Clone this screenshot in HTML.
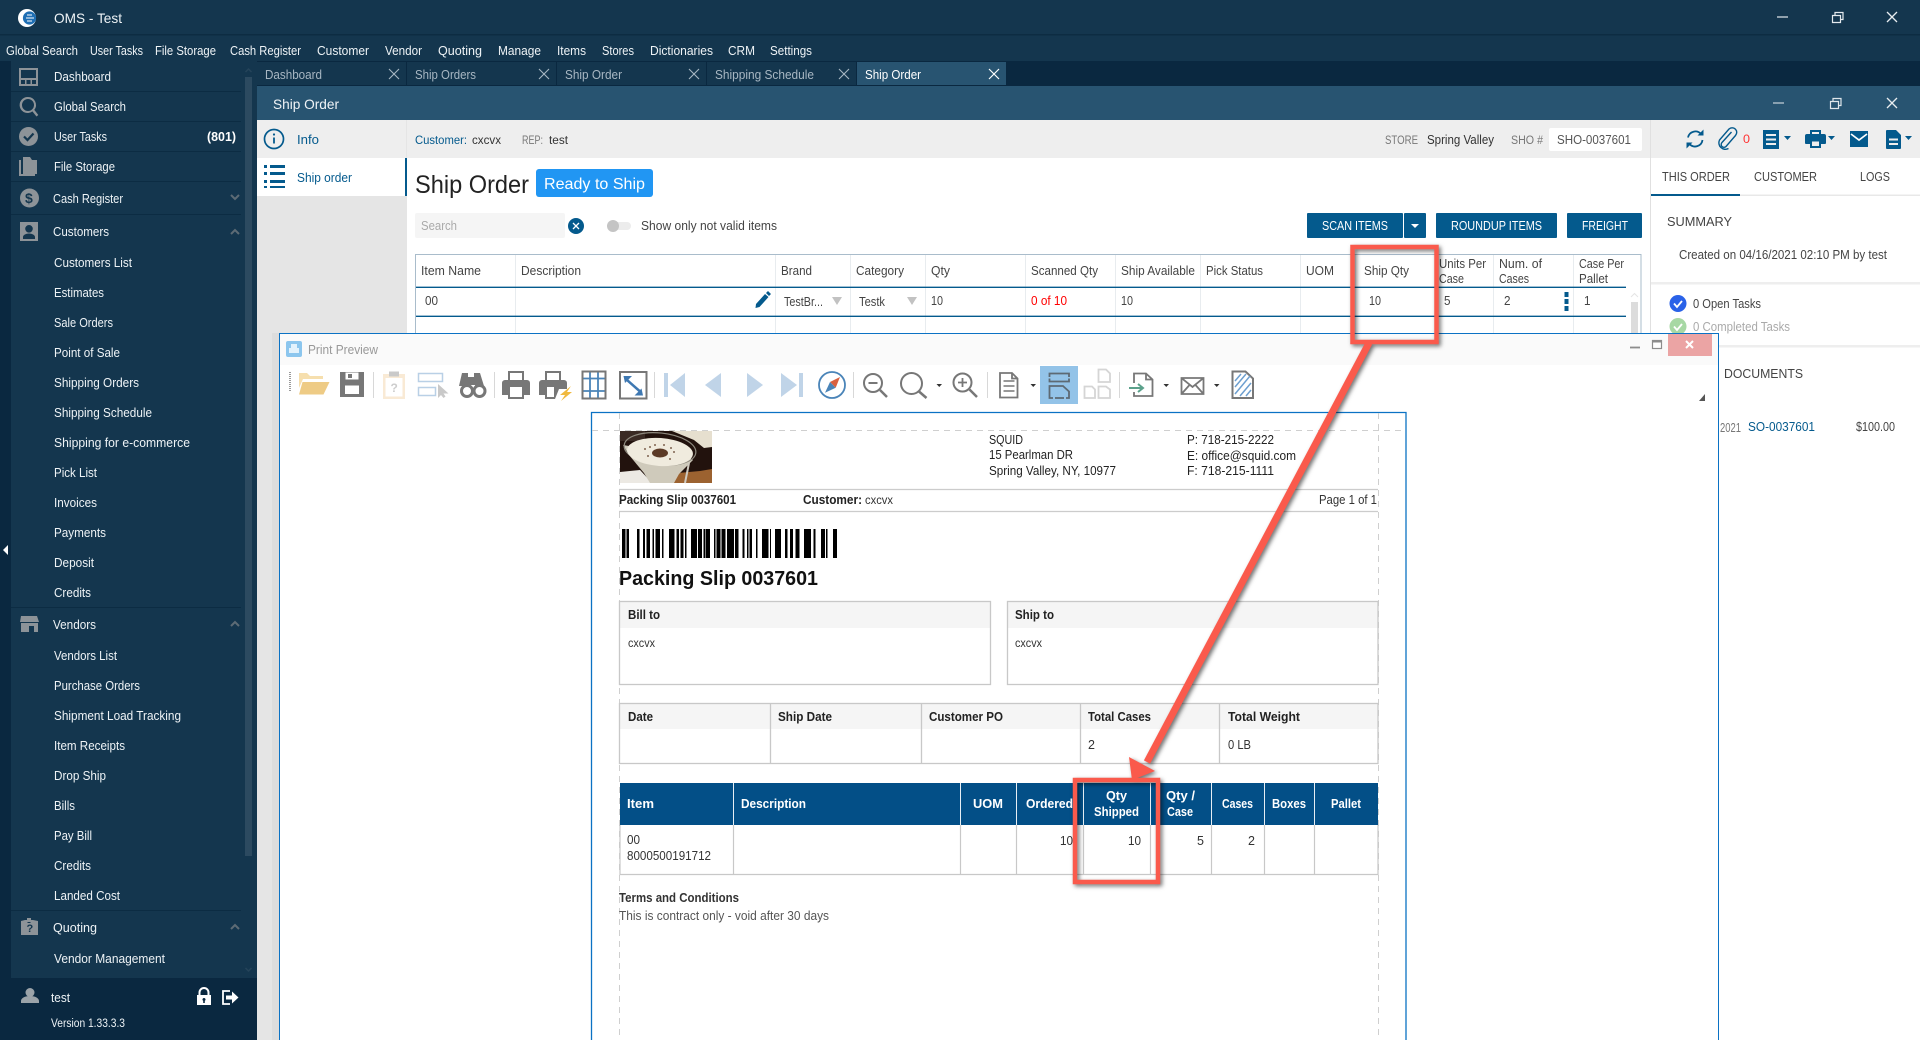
<!DOCTYPE html>
<html><head><meta charset="utf-8"><title>OMS - Test</title>
<style>
html,body{margin:0;padding:0;width:1920px;height:1040px;overflow:hidden;background:#fff}
svg{display:block}
text{font-family:"Liberation Sans",sans-serif;font-size:12.5px;fill:#333}
.w text{fill:#eef3f6}
.t text{fill:#a8b7c3}
.g text{fill:#777}
.b text{font-weight:bold;fill:#222}
.h text{font-weight:bold;fill:#fff}
.k text{fill:#444}
</style></head><body>
<svg xmlns="http://www.w3.org/2000/svg" width="1920" height="1040" viewBox="0 0 1920 1040">
<!-- window chrome -->
<rect width="1920" height="1040" fill="#14364e"/>
<rect y="34" width="1920" height="1.5" fill="#0d2c42"/>
<rect x="0" y="61" width="11" height="979" fill="#0a2840"/>
<circle cx="27" cy="18" r="9" fill="#fff"/>
<circle cx="29.5" cy="18" r="6.6" fill="#1f6fb4"/>
<path d="M27 15h5M26 18h8M27 21h5" stroke="#fff" stroke-width="1.100"/>
<g class="w">
<text x="54" y="23" textLength="68" lengthAdjust="spacingAndGlyphs" style="font-size:14px">OMS - Test</text>
<text x="6" y="55" textLength="72" lengthAdjust="spacingAndGlyphs">Global Search</text>
<text x="90" y="55" textLength="53" lengthAdjust="spacingAndGlyphs">User Tasks</text>
<text x="155" y="55" textLength="61" lengthAdjust="spacingAndGlyphs">File Storage</text>
<text x="230" y="55" textLength="71" lengthAdjust="spacingAndGlyphs">Cash Register</text>
<text x="317" y="55" textLength="52" lengthAdjust="spacingAndGlyphs">Customer</text>
<text x="385" y="55" textLength="37" lengthAdjust="spacingAndGlyphs">Vendor</text>
<text x="438" y="55" textLength="44" lengthAdjust="spacingAndGlyphs">Quoting</text>
<text x="498" y="55" textLength="43" lengthAdjust="spacingAndGlyphs">Manage</text>
<text x="557" y="55" textLength="29" lengthAdjust="spacingAndGlyphs">Items</text>
<text x="602" y="55" textLength="32" lengthAdjust="spacingAndGlyphs">Stores</text>
<text x="650" y="55" textLength="63" lengthAdjust="spacingAndGlyphs">Dictionaries</text>
<text x="728" y="55" textLength="27" lengthAdjust="spacingAndGlyphs">CRM</text>
<text x="770" y="55" textLength="42" lengthAdjust="spacingAndGlyphs">Settings</text>
</g>
<path d="M1777 17h11" stroke="#b9c5cd" stroke-width="1.5"/>
<path d="M1832.5 15.5h8v7h-8zM1835 15v-2.500h8v7h-2" fill="none" stroke="#e4eaee" stroke-width="1.2"/>
<path d="M1887 12l10 10M1897 12l-10 10" stroke="#e8edf0" stroke-width="1.3"/>
<!-- tab strip -->
<rect x="257" y="61" width="1663" height="25" fill="#0a2840"/>
<rect x="257" y="62" width="149" height="23" fill="#14364e"/>
<rect x="407" y="62" width="149" height="23" fill="#14364e"/>
<rect x="557" y="62" width="149" height="23" fill="#14364e"/>
<rect x="707" y="62" width="149" height="23" fill="#14364e"/>
<rect x="857" y="62" width="149" height="23" fill="#285471"/>
<g class="t">
<text x="265" y="79" textLength="57" lengthAdjust="spacingAndGlyphs">Dashboard</text>
<text x="415" y="79" textLength="61" lengthAdjust="spacingAndGlyphs">Ship Orders</text>
<text x="565" y="79" textLength="57" lengthAdjust="spacingAndGlyphs">Ship Order</text>
<text x="715" y="79" textLength="99" lengthAdjust="spacingAndGlyphs">Shipping Schedule</text>
</g>
<text x="865" y="79" textLength="56" lengthAdjust="spacingAndGlyphs" style="fill:#fff">Ship Order</text>
<path d="M389 69l10 10M399 69l-10 10M539 69l10 10M549 69l-10 10M689 69l10 10M699 69l-10 10M839 69l10 10M849 69l-10 10" stroke="#a8b7c3" stroke-width="1.1"/>
<path d="M989 69l10 10M999 69l-10 10" stroke="#fff" stroke-width="1.2"/>
<!-- inner window header -->
<rect x="257" y="86" width="1663" height="34" fill="#285471"/>
<text x="273" y="109" textLength="66" lengthAdjust="spacingAndGlyphs" style="fill:#f0f4f7;font-size:14px">Ship Order</text>
<path d="M1773 103h11" stroke="#a9bac6" stroke-width="1.5"/>
<path d="M1830.500 101.500h8v7h-8zM1833 101v-2.500h8v7h-2" fill="none" stroke="#dfe6ea" stroke-width="1.2"/>
<path d="M1887 98l10 10M1897 98l-10 10" stroke="#e8edf0" stroke-width="1.300"/>
<!-- sidebar -->
<path d="M11 91.500h230M11 121.500h230M11 151.500h230M11 181.500h230M11 214.500h230M11 607.500h230M11 910.500h230" stroke="#0c2c43" stroke-width="1"/>
<rect x="245" y="77" width="7" height="779" fill="#2c4a60"/>
<path d="M245.500 72l3-3 3 3M245.500 968l3 3 3-3" fill="none" stroke="#25445a" stroke-width="1.500"/>
<g class="w">
<text x="54" y="81" textLength="57" lengthAdjust="spacingAndGlyphs">Dashboard</text>
<text x="54" y="111" textLength="72" lengthAdjust="spacingAndGlyphs">Global Search</text>
<text x="54" y="141" textLength="53" lengthAdjust="spacingAndGlyphs">User Tasks</text>
<text x="54" y="171" textLength="61" lengthAdjust="spacingAndGlyphs">File Storage</text>
<text x="53" y="203" textLength="70" lengthAdjust="spacingAndGlyphs">Cash Register</text>
<text x="53" y="236" textLength="56" lengthAdjust="spacingAndGlyphs">Customers</text>
<text x="54" y="267" textLength="78" lengthAdjust="spacingAndGlyphs">Customers List</text>
<text x="54" y="297" textLength="50" lengthAdjust="spacingAndGlyphs">Estimates</text>
<text x="54" y="327" textLength="59" lengthAdjust="spacingAndGlyphs">Sale Orders</text>
<text x="54" y="357" textLength="66" lengthAdjust="spacingAndGlyphs">Point of Sale</text>
<text x="54" y="387" textLength="85" lengthAdjust="spacingAndGlyphs">Shipping Orders</text>
<text x="54" y="417" textLength="98" lengthAdjust="spacingAndGlyphs">Shipping Schedule</text>
<text x="54" y="447" textLength="136" lengthAdjust="spacingAndGlyphs">Shipping for e-commerce</text>
<text x="54" y="477" textLength="43" lengthAdjust="spacingAndGlyphs">Pick List</text>
<text x="54" y="507" textLength="43" lengthAdjust="spacingAndGlyphs">Invoices</text>
<text x="54" y="537" textLength="52" lengthAdjust="spacingAndGlyphs">Payments</text>
<text x="54" y="567" textLength="40" lengthAdjust="spacingAndGlyphs">Deposit</text>
<text x="54" y="597" textLength="37" lengthAdjust="spacingAndGlyphs">Credits</text>
<text x="53" y="629" textLength="43" lengthAdjust="spacingAndGlyphs">Vendors</text>
<text x="54" y="660" textLength="63" lengthAdjust="spacingAndGlyphs">Vendors List</text>
<text x="54" y="690" textLength="86" lengthAdjust="spacingAndGlyphs">Purchase Orders</text>
<text x="54" y="720" textLength="127" lengthAdjust="spacingAndGlyphs">Shipment Load Tracking</text>
<text x="54" y="750" textLength="71" lengthAdjust="spacingAndGlyphs">Item Receipts</text>
<text x="54" y="780" textLength="52" lengthAdjust="spacingAndGlyphs">Drop Ship</text>
<text x="54" y="810" textLength="21" lengthAdjust="spacingAndGlyphs">Bills</text>
<text x="54" y="840" textLength="38" lengthAdjust="spacingAndGlyphs">Pay Bill</text>
<text x="54" y="870" textLength="37" lengthAdjust="spacingAndGlyphs">Credits</text>
<text x="54" y="900" textLength="66" lengthAdjust="spacingAndGlyphs">Landed Cost</text>
<text x="53" y="932" textLength="44" lengthAdjust="spacingAndGlyphs">Quoting</text>
<text x="54" y="963" textLength="111" lengthAdjust="spacingAndGlyphs">Vendor Management</text>
</g>
<text x="207" y="141" textLength="29" lengthAdjust="spacingAndGlyphs" style="fill:#fff;font-weight:bold">(801)</text>
<path d="M231 195l4 4 4-4M231 234l4-4 4 4M231 626l4-4 4 4M231 929l4-4 4 4" fill="none" stroke="#5d6b75" stroke-width="2"/>
<!-- sidebar icons -->
<g fill="#8d9398">
<path fill-rule="evenodd" d="M19 68h19v18H19zM21 70v8h15v-8zM21 80v4h4v-4zM26.500 80v4h4v-4zM32 80v4h4v-4z"/>
<path fill-rule="evenodd" d="M28 97a8 8 0 0 1 6.300 12.900l4 5.100-1.800 1.500-4.100-5.100A8 8 0 1 1 28 97zm0 2a6 6 0 1 0 0 12 6 6 0 0 0 0-12z"/>
<circle cx="28.500" cy="136.500" r="9.500"/>
<path d="M23 157h7l2 3h5v14H23zM19 160h2v14h14v2H19z"/>
<circle cx="29.500" cy="198" r="9.500"/>
<path fill-rule="evenodd" d="M20 222h18v19H20zM29 225a3.800 3.800 0 1 0 0 7.600 3.800 3.800 0 0 0 0-7.600zM23 239h12v-2c0-2-3-3.500-6-3.500s-6 1.500-6 3.500z"/>
<path d="M21 616h16l2 6H20zM20 623h18v9h-4v-6h-5v6H21v-9zM23 626h3v3h-3z"/>
<path fill-rule="evenodd" d="M25 920h2v-2h4v2h2l5 1v14H21v-14zM27.500 922v1h3v-1z"/>
</g>
<path d="M24 136.500l3.500 3.500 6-6.500" fill="none" stroke="#14364e" stroke-width="2.200"/>
<text x="25" y="203" style="font-size:14px;font-weight:bold;fill:#14364e">$</text>
<text x="26.500" y="932" style="font-size:11px;font-weight:bold;fill:#14364e">?</text>
<path d="M8 545v10l-5-5z" fill="#fff"/>
<!-- footer -->
<rect x="11" y="978" width="246" height="62" fill="#0a2840"/>
<path d="M21 1001c0-3 4-5 9-5s9 2 9 5v2H21zM30 988a4.500 4.500 0 1 1 0 9 4.500 4.500 0 0 1 0-9z" fill="#9ba3a9"/>
<g class="w">
<text x="51" y="1002" textLength="19" lengthAdjust="spacingAndGlyphs">test</text>
<text x="51" y="1027" textLength="74" lengthAdjust="spacingAndGlyphs" style="font-size:11.500px">Version 1.33.3.3</text>
</g>
<path fill-rule="evenodd" d="M197 995h1.500v-2.500a5.500 5.500 0 0 1 11 0V995h1.500v10h-14zM200.500 995h7v-2.500a3.500 3.500 0 0 0-7 0zM204 998a1.500 1.500 0 0 0-.8 2.800V1003h1.600v-2.200A1.500 1.500 0 0 0 204 998z" fill="#fff"/>
<path d="M230 991h-7v13h7" fill="none" stroke="#fff" stroke-width="1.800"/>
<path d="M226 995.500h6v-4l6.500 6-6.500 6v-4h-6z" fill="#fff"/>
<!-- left tabs -->
<rect x="257" y="120" width="150" height="920" fill="#e5e5e5"/>
<rect x="257" y="120" width="149" height="38" fill="#eeeeee"/>
<rect x="257" y="158" width="148" height="38" fill="#fff"/>
<rect x="405" y="158" width="2" height="38" fill="#045a8d"/>
<circle cx="274" cy="139" r="9.500" fill="none" stroke="#045a8d" stroke-width="1.700"/>
<path d="M274 137.500v6" stroke="#045a8d" stroke-width="1.800"/><circle cx="274" cy="134.500" r="1.100" fill="#045a8d"/>
<path d="M264 165h3v3h-3zM264 172h3v3h-3zM264 180h3v3h-3zM264 187h0M270 165h15v3h-15zM270 172h15v3h-15zM270 180h15v3h-15zM264 186h3v2h-3zM270 186h15v2h-15z" fill="#045a8d"/>
<text x="297" y="144" textLength="22" lengthAdjust="spacingAndGlyphs" style="fill:#045a8d">Info</text>
<text x="297" y="182" textLength="55" lengthAdjust="spacingAndGlyphs" style="fill:#045a8d">Ship order</text>
<!-- main pane -->
<rect x="407" y="120" width="1243" height="920" fill="#fff"/>
<rect x="407" y="120" width="1243" height="38" fill="#eeeeee"/>
<rect x="407" y="333" width="1243" height="707" fill="#fafafa"/>
<text x="415" y="144" textLength="52" lengthAdjust="spacingAndGlyphs" style="fill:#045a8d;font-size:11.500px">Customer:</text>
<text x="472" y="144" textLength="29" lengthAdjust="spacingAndGlyphs" style="font-size:11.500px">cxcvx</text>
<text x="522" y="144" textLength="21" lengthAdjust="spacingAndGlyphs" style="fill:#777;font-size:11.500px">REP:</text>
<text x="549" y="144" textLength="19" lengthAdjust="spacingAndGlyphs" style="font-size:11.500px">test</text>
<text x="1385" y="144" textLength="33" lengthAdjust="spacingAndGlyphs" style="fill:#777;font-size:11.500px">STORE</text>
<text x="1427" y="144" textLength="67" lengthAdjust="spacingAndGlyphs">Spring Valley</text>
<text x="1511" y="144" textLength="32" lengthAdjust="spacingAndGlyphs" style="fill:#777;font-size:11.500px">SHO #</text>
<rect x="1549" y="128" width="93" height="23" rx="2" fill="#fff"/>
<text x="1557" y="144" textLength="74" lengthAdjust="spacingAndGlyphs" style="fill:#555">SHO-0037601</text>
<text x="415" y="193" textLength="114" lengthAdjust="spacingAndGlyphs" style="font-size:25px;fill:#222">Ship Order</text>
<rect x="536" y="169" width="117" height="28" rx="3" fill="#2196f3"/>
<text x="544" y="189" textLength="101" lengthAdjust="spacingAndGlyphs" style="font-size:16px;fill:#fff">Ready to Ship</text>
<rect x="415" y="213" width="150" height="25" rx="2" fill="#f5f5f5"/>
<text x="421" y="230" textLength="36" lengthAdjust="spacingAndGlyphs" style="fill:#aaa">Search</text>
<circle cx="576" cy="226" r="8" fill="#045a8d"/>
<path d="M573 223l6 6M579 223l-6 6" stroke="#fff" stroke-width="1.300"/>
<rect x="609" y="222" width="22" height="8" rx="4" fill="#ececec"/>
<circle cx="613" cy="226" r="6" fill="#c4c4c4"/>
<text x="641" y="230" textLength="136" lengthAdjust="spacingAndGlyphs" style="fill:#444">Show only not valid items</text>
<rect x="1307" y="213" width="96" height="25" rx="1" fill="#045a8d"/>
<rect x="1404" y="213" width="22" height="25" rx="1" fill="#045a8d"/>
<path d="M1411 224h8l-4 4z" fill="#fff"/>
<rect x="1436" y="213" width="121" height="25" rx="1" fill="#045a8d"/>
<rect x="1567" y="213" width="75" height="25" rx="1" fill="#045a8d"/>
<text x="1322" y="230" textLength="66" lengthAdjust="spacingAndGlyphs" style="fill:#fff">SCAN ITEMS</text>
<text x="1451" y="230" textLength="91" lengthAdjust="spacingAndGlyphs" style="fill:#fff">ROUNDUP ITEMS</text>
<text x="1582" y="230" textLength="46" lengthAdjust="spacingAndGlyphs" style="fill:#fff">FREIGHT</text>
<!-- table -->
<path d="M415.500 333V254.500H1641V333" fill="none" stroke="#a9bccb"/>
<path d="M515.500 255v78M775.500 255v78M850.500 255v78M925.500 255v78M1025.500 255v78M1115.500 255v78M1200.500 255v78M1300.500 255v78M1355.500 255v78M1435.500 255v78M1493.500 255v78M1573.500 255v78" stroke="#e8ecef"/>
<path d="M416 287.300h1210M416 316.300h1210" stroke="#045a8d" stroke-width="1.400"/>
<g class="k">
<text x="421" y="275" textLength="60" lengthAdjust="spacingAndGlyphs">Item Name</text>
<text x="521" y="275" textLength="60" lengthAdjust="spacingAndGlyphs">Description</text>
<text x="781" y="275" textLength="31" lengthAdjust="spacingAndGlyphs">Brand</text>
<text x="856" y="275" textLength="48" lengthAdjust="spacingAndGlyphs">Category</text>
<text x="931" y="275" textLength="19" lengthAdjust="spacingAndGlyphs">Qty</text>
<text x="1031" y="275" textLength="67" lengthAdjust="spacingAndGlyphs">Scanned Qty</text>
<text x="1121" y="275" textLength="74" lengthAdjust="spacingAndGlyphs">Ship Available</text>
<text x="1206" y="275" textLength="57" lengthAdjust="spacingAndGlyphs">Pick Status</text>
<text x="1306" y="275" textLength="28" lengthAdjust="spacingAndGlyphs">UOM</text>
<text x="1364" y="275" textLength="45" lengthAdjust="spacingAndGlyphs">Ship Qty</text>
<text x="1439" y="268" textLength="47" lengthAdjust="spacingAndGlyphs">Units Per</text>
<text x="1439" y="283" textLength="25" lengthAdjust="spacingAndGlyphs">Case</text>
<text x="1499" y="268" textLength="43" lengthAdjust="spacingAndGlyphs">Num. of</text>
<text x="1499" y="283" textLength="30" lengthAdjust="spacingAndGlyphs">Cases</text>
<text x="1579" y="268" textLength="45" lengthAdjust="spacingAndGlyphs">Case Per</text>
<text x="1579" y="283" textLength="29" lengthAdjust="spacingAndGlyphs">Pallet</text>
<text x="425" y="305" textLength="13" lengthAdjust="spacingAndGlyphs">00</text>
<text x="784" y="306" textLength="39" lengthAdjust="spacingAndGlyphs">TestBr...</text>
<text x="859" y="306" textLength="26" lengthAdjust="spacingAndGlyphs">Testk</text>
<text x="931" y="305" textLength="12" lengthAdjust="spacingAndGlyphs">10</text>
<text x="1121" y="305" textLength="12" lengthAdjust="spacingAndGlyphs">10</text>
<text x="1369" y="305" textLength="12" lengthAdjust="spacingAndGlyphs">10</text>
<text x="1444" y="305" textLength="6.500" lengthAdjust="spacingAndGlyphs">5</text>
<text x="1504" y="305" textLength="6.500" lengthAdjust="spacingAndGlyphs">2</text>
<text x="1584" y="305" textLength="6.500" lengthAdjust="spacingAndGlyphs">1</text>
</g>
<text x="1031" y="305" textLength="36" lengthAdjust="spacingAndGlyphs" style="fill:#f00">0 of 10</text>
<path d="M756 304l9-10 3.500 3-9 10-4 1zM766 293l2-2 3 3-2 2z" fill="#045a8d"/>
<path d="M832 297h10l-5 8zM907 297h10l-5 8z" fill="#c2c2c2"/>
<path d="M1564.500 292h4v5h-4zM1564.500 299h4v5h-4zM1564.500 306h4v5h-4z" fill="#045a8d"/>
<rect x="1631" y="302" width="7" height="31" fill="#dcdcdc"/>
<path d="M1631 297l3.500-3.500 3.500 3.500" fill="none" stroke="#e4e4e4"/>
<!-- right panel -->
<rect x="1651" y="120" width="269" height="38" fill="#eeeeee"/>
<rect x="1650" y="120" width="1" height="920" fill="#e0e0e0"/>
<rect x="1651" y="158" width="269" height="882" fill="#fff"/>
<rect x="1651" y="194.500" width="269" height="1.500" fill="#e8e8e8"/>
<rect x="1651" y="194" width="89" height="2" fill="#045a8d"/>
<g class="k">
<text x="1662" y="181" textLength="68" lengthAdjust="spacingAndGlyphs">THIS ORDER</text>
<text x="1754" y="181" textLength="63" lengthAdjust="spacingAndGlyphs">CUSTOMER</text>
<text x="1860" y="181" textLength="30" lengthAdjust="spacingAndGlyphs">LOGS</text>
<text x="1667" y="226" textLength="65" lengthAdjust="spacingAndGlyphs">SUMMARY</text>
<text x="1679" y="259" textLength="208" lengthAdjust="spacingAndGlyphs">Created on 04/16/2021 02:10 PM by test</text>
<text x="1693" y="308" textLength="68" lengthAdjust="spacingAndGlyphs">0 Open Tasks</text>
<text x="1724" y="378" textLength="79" lengthAdjust="spacingAndGlyphs">DOCUMENTS</text>
<text x="1856" y="431" textLength="39" lengthAdjust="spacingAndGlyphs">$100.00</text>
</g>
<text x="1693" y="331" textLength="97" lengthAdjust="spacingAndGlyphs" style="fill:#aaa">0 Completed Tasks</text>
<text x="1720" y="432" textLength="21" lengthAdjust="spacingAndGlyphs" style="fill:#777">2021</text>
<text x="1748" y="431" textLength="67" lengthAdjust="spacingAndGlyphs" style="fill:#045a8d">SO-0037601</text>
<rect x="1651" y="282" width="269" height="2.500" fill="#eeeeee"/>
<rect x="1651" y="345" width="269" height="2.500" fill="#eeeeee"/>
<circle cx="1678" cy="303.500" r="8.500" fill="#2a62e8"/>
<path d="M1674 303.500l3 3.500 5-6" fill="none" stroke="#fff" stroke-width="1.800"/>
<circle cx="1678" cy="326.500" r="8.500" fill="#a7d8a4"/>
<path d="M1674 326.500l3 3.500 5-6" fill="none" stroke="#fff" stroke-width="1.800"/>
<!-- right toolbar icons -->
<g fill="none" stroke="#045a8d" stroke-width="1.800">
<path d="M1688 137.500a7.500 7.500 0 0 1 13-3.500M1702.500 140a7.500 7.500 0 0 1-13 4"/>
<path d="M1733.500 133l-9.500 10.500a2.800 2.800 0 0 0 4 4l9.500-11a4.600 4.600 0 0 0-6.500-6.500l-9.500 11a6.500 6.500 0 0 0 9 8.500" stroke-width="1.400" transform="translate(-2 -1)"/>
</g>
<path d="M1703.500 129.500v6h-6zM1686.500 148.500v-6h6z" fill="#045a8d"/>
<text x="1743" y="143" textLength="7" lengthAdjust="spacingAndGlyphs" style="fill:#f33;font-size:12px">0</text>
<path fill-rule="evenodd" d="M1763 130h16v19h-16zM1766 134v2h10v-2zM1766 138.500v2h10v-2zM1766 143v2h10v-2z" fill="#045a8d"/>
<path d="M1784 136h7l-3.500 4zM1828 136h7l-3.500 4zM1905 136h7l-3.500 4z" fill="#045a8d"/>
<path fill-rule="evenodd" d="M1810 130h11v4h3a2 2 0 0 1 2 2v7a1 1 0 0 1-1 1h-4v4h-11v-4h-4a1 1 0 0 1-1-1v-7a2 2 0 0 1 2-2h3zM1812 132v2h7v-2zM1812 141.500v4.500h7v-4.500z" fill="#045a8d"/>
<path d="M1850 131h18v16h-18z" fill="#045a8d"/>
<path d="M1851 134l8 6 8-6" fill="none" stroke="#fff" stroke-width="1.700"/>
<path fill-rule="evenodd" d="M1887 130h9l5 5v13a1 1 0 0 1-1 1h-13a1 1 0 0 1-1-1v-17a1 1 0 0 1 1-1zM1889 138.500v2h9v-2zM1889 143v2h9v-2z" fill="#045a8d"/>
<!-- print preview window -->
<rect x="272" y="333" width="7" height="707" fill="#d5d5d5" opacity=".5"/>
<rect x="279.500" y="333.500" width="1439" height="720" fill="#fff" stroke="#0b72c4"/>
<rect x="280" y="334" width="1438" height="31" fill="#fafafa"/>
<rect x="286" y="341" width="16" height="16" rx="2" fill="#8cc6ee"/>
<path d="M291 344h6v4h2v5h-10v-5h2z" fill="#e3f2fc"/>
<text x="308" y="354" textLength="70" lengthAdjust="spacingAndGlyphs" style="fill:#999">Print Preview</text>
<path d="M1630 347.500h10" stroke="#8d8d8d" stroke-width="1.800"/>
<rect x="1652.500" y="340.500" width="9" height="8" fill="#fff" stroke="#8d8d8d" stroke-width="1.200"/>
<rect x="1652" y="340" width="10" height="2.500" fill="#8d8d8d"/>
<rect x="1668" y="334" width="44" height="22" fill="#eba4a4"/>
<path d="M1686 341l7 7M1693 341l-7 7" stroke="#fff" stroke-width="2"/>
<path d="M1705 394v7h-6z" fill="#555"/>
<!-- toolbar -->
<path d="M290 372v20" stroke="#999" stroke-width="2" stroke-dasharray="1 1"/>
<path d="M373.500 372v26M494.500 372v26M654.500 372v26M853.500 372v26M987.500 372v26M1119.500 372v26" stroke="#d8d8d8"/>
<!-- folder -->
<path d="M299 373h8l3 3h13v3H303l-4 9z" fill="#f6dfae"/>
<path d="M302.500 382h27l-6 12.500h-24.500z" fill="#eecb85"/>
<!-- save -->
<path fill-rule="evenodd" d="M340 372h24v25h-24zM345.500 372.500v7h13v-7zM345 385.500v8.500h14v-8.500z" fill="#777"/>
<rect x="348" y="374" width="4" height="4" fill="#777"/>
<!-- clipboard -->
<path fill-rule="evenodd" d="M383 374h22v25h-22zM385.500 378v18.500h17V378z" fill="#f9ead5"/>
<rect x="389" y="371.500" width="10" height="5" fill="#c9c9c9"/>
<text x="390.500" y="392" style="font-size:12px;font-weight:bold;fill:#cdcdcd">?</text>
<!-- select -->
<path d="M418.500 373.500h24v8h-24zM418.500 387.500h17v8h-17z" fill="none" stroke="#b9d0e6" stroke-width="1.500"/>
<path d="M438 384v14l3-3 2.500 3 2-1.500-2-3h5z" fill="#c9c9c9"/>
<!-- binoculars -->
<path d="M462 373h6v4h-1l1 9h-9zM474 373h6l4 13h-9l1-9h-2zM467 377h9v8h-9z" fill="#777"/>
<circle cx="467" cy="391" r="5.500" fill="#fff" stroke="#777" stroke-width="3"/>
<circle cx="479.500" cy="391" r="5.500" fill="#fff" stroke="#777" stroke-width="3"/>
<!-- printers -->
<path fill-rule="evenodd" d="M508 371h16v9h3a3 3 0 0 1 3 3v12h-6v4h-16v-4h-6v-12a3 3 0 0 1 3-3h3zM510 373v7h12v-7zM510 387v10h12v-10z" fill="#777"/>
<path fill-rule="evenodd" d="M545 371h16v9h3a3 3 0 0 1 3 3v6h-8l-4 10h-10v-4h-6v-12a3 3 0 0 1 3-3h3zM547 373v7h12v-7zM547 387v10h7v-10z" fill="#777"/>
<path d="M571 386l-11 9h5l-4 6 11-9h-5z" fill="#f0b93e"/>
<!-- grid -->
<path d="M590 372v26M598 372v26M583 378.500h22M583 391h22" stroke="#4a84b8" stroke-width="1.800"/>
<rect x="582.500" y="371.500" width="23" height="27" fill="none" stroke="#777" stroke-width="2"/>
<!-- expand -->
<rect x="620" y="372" width="26.500" height="26.500" fill="none" stroke="#777" stroke-width="2"/>
<path d="M627 380l12.500 11" stroke="#3e78b2" stroke-width="2.500"/>
<path d="M623.500 376h8.500l-7 7zM643 395.500h-8.500l7-7z" fill="#3e78b2"/>
<g fill="#c0d4e8">
<path d="M664 373h4v24h-4zM685 373v24l-15-12z"/>
<path d="M721 373v24l-16-12z"/>
<path d="M747 373v24l16-12z"/>
<path d="M781 373v24l16-12zM799 373h4v24h-4z"/>
</g>
<!-- compass -->
<circle cx="832" cy="385" r="13" fill="#fff" stroke="#4a84b8" stroke-width="1.800"/>
<path d="M840 377l-4.300 10.700-5.700-5.700z" fill="#d9603f"/>
<path d="M825 392.700l5-10.700 5.700 5.700z" fill="#4a84b8"/>
<!-- zooms -->
<g fill="none" stroke="#777">
<circle cx="873" cy="383" r="9" stroke-width="2"/><path d="M868.500 383h9" stroke-width="2"/><path d="M880 390l7 7" stroke-width="2.500"/>
<circle cx="911.500" cy="383.500" r="10.500" stroke-width="2"/><path d="M919 391.500l7.500 6.500" stroke-width="2.500"/>
<circle cx="962.500" cy="382.500" r="9" stroke-width="2"/><path d="M958 382.500h9M962.500 378v9" stroke-width="1.800"/><path d="M969.500 389.500l7.500 7.500" stroke-width="2.500"/>
<path d="M1000 373h12l5.500 5.500V397.500h-17.500zM1012 373v5.500h5.500" stroke-width="1.800"/>
<path d="M1003.500 381h11M1003.500 386h11M1003.500 391h11" stroke-width="1.600"/>
</g>
<rect x="1040" y="366" width="38" height="38" fill="#93c3e8"/>
<g fill="none" stroke="#5d6a74" stroke-width="1.800">
<path d="M1049.500 377v-3.500h19.500v3.500M1049.500 378.500v3h19.500v-3"/>
<path d="M1053 398h-3.500v-12h13.500l6 5.500v6.500h-3"/>
<path d="M1055 398h9"/>
</g>
<g fill="none" stroke="#d5d5d5" stroke-width="1.800">
<path d="M1098.500 369.500h7.500l4 4v8.500h-11.500zM1084.500 386.500h7.500l3 3v8.500h-10.500zM1098.500 386.500h7.500l4 3v8.500h-11.500z"/>
</g>
<g fill="none" stroke="#777" stroke-width="1.800">
<path d="M1134 383v-9.500h12l6.500 6V396h-18.500v-4M1146 373.500v6h6.500"/>
<path d="M1181.500 378h22v16h-22zM1181.500 378l11 9 11-9M1181.500 394l8-9M1203.500 394l-8-9"/>
<path d="M1232.500 371.500h13l7.500 7V398h-20.500z" stroke-width="2"/>
</g>
<path d="M1129 388h13M1138 384l5 4-5 4" fill="none" stroke="#5ba18b" stroke-width="2"/>
<path d="M1235 381l6-7M1235 387l11-13M1235 394l15-18M1240 396l11-13M1246 396l5-6" stroke="#6d9fd0" stroke-width="1.500"/>
<path d="M936.500 384h5.500l-2.750 3zM1030.500 384h5.500l-2.750 3zM1163.500 384h5.500l-2.750 3zM1214 384h5.500l-2.750 3z" fill="#333"/>
<!-- report page -->
<path d="M591.500 1040V412.500H1406V1040" fill="none" stroke="#0b72c4" stroke-width="1.300"/>
<path d="M619.500 413V1040M1378.500 413V1040M592 430.500H1405" fill="none" stroke="#cfcfcf" stroke-dasharray="6 5"/>
<!-- photo -->
<rect x="620" y="431" width="92" height="52" fill="#22120d"/>
<rect x="620" y="431" width="25" height="10" fill="#3a2a24"/>
<path d="M620 472l20-2 12 13h-32z" fill="#ece9e3"/>
<path d="M670 480l8-7 22-2 12-2v14h-42z" fill="#9c6230"/>
<path d="M672 431h40v16l-8 1-10-8z" fill="#e6dfcf"/>
<path d="M623 445l6 10 15 18 6 10h24l5-9 14-14-6-4z" fill="#cfcabb"/>
<ellipse cx="660" cy="449" rx="36" ry="16" transform="rotate(6 660 449)" fill="none" stroke="#8f8a7f" stroke-width="1.200"/>
<ellipse cx="660" cy="452" rx="33" ry="14" transform="rotate(4 660 452)" fill="#f0ebde"/>
<ellipse cx="660" cy="453" rx="8" ry="4.500" fill="#5c3a26"/>
<g fill="#5c3a26"><circle cx="645" cy="449" r=".9"/><circle cx="650" cy="447" r=".9"/><circle cx="671" cy="448" r=".9"/><circle cx="674" cy="452" r=".9"/><circle cx="648" cy="456" r=".9"/><circle cx="670" cy="459" r=".9"/><circle cx="655" cy="445" r=".9"/><circle cx="664" cy="445" r=".9"/></g>
<path d="M689 463l-4 20" stroke="#cfcac0" stroke-width="2"/>
<g class="k">
<text x="989" y="444" textLength="34" lengthAdjust="spacingAndGlyphs" style="fill:#222">SQUID</text>
<text x="989" y="459" textLength="84" lengthAdjust="spacingAndGlyphs" style="fill:#222">15 Pearlman DR</text>
<text x="989" y="475" textLength="127" lengthAdjust="spacingAndGlyphs" style="fill:#222">Spring Valley, NY, 10977</text>
<text x="1187" y="444" textLength="87" lengthAdjust="spacingAndGlyphs" style="fill:#222">P: 718-215-2222</text>
<text x="1187" y="460" textLength="109" lengthAdjust="spacingAndGlyphs" style="fill:#222">E: office@squid.com</text>
<text x="1187" y="475" textLength="87" lengthAdjust="spacingAndGlyphs" style="fill:#222">F: 718-215-1111</text>
</g>
<path d="M619 489.500h759M619 511.500h759" stroke="#ccc" stroke-width="1.300"/>
<g class="b">
<text x="619" y="504" textLength="117" lengthAdjust="spacingAndGlyphs">Packing Slip 0037601</text>
<text x="803" y="504" textLength="59" lengthAdjust="spacingAndGlyphs">Customer:</text>
<text x="619" y="585" textLength="199" lengthAdjust="spacingAndGlyphs" style="font-size:20px;fill:#111">Packing Slip 0037601</text>
</g>
<text x="865" y="504" textLength="28" lengthAdjust="spacingAndGlyphs" style="font-size:11.500px">cxcvx</text>
<text x="1319" y="504" textLength="58" lengthAdjust="spacingAndGlyphs">Page 1 of 1</text>
<!-- barcode -->
<path fill="#000" d="M622 529h3.500v29H622zM626.500 529h2.500v29h-2.500zM637 529h2.500v29H637zM643 529h2v29h-2zM646.500 529h3.500v29h-3.500zM652.500 529h1.500v29h-1.500zM655.500 529h4.500v29h-4.500zM662 529h1.500v29H662zM669 529h5.500v29H669zM676.500 529h2.500v29h-2.500zM680.500 529h3v29h-3zM685 529h1.500v29H685zM691 529h6v29h-6zM698 529h4v29h-4zM703.500 529h2v29h-2zM706 529h4v29h-4zM714 529h1.500v29H714zM716.500 529h4v29h-4zM721.500 529h4v29h-4zM727 529h7v29h-7zM735 529h3.500v29H735zM742.500 529h2v29h-2zM747 529h1.500v29H747zM749.500 529h2.500v29h-2.500zM756 529h1.500v29H756zM762 529h6.500v29H762zM770 529h1v29h-1zM775 529h6v29h-6zM785 529h2.500v29H785zM790 529h3v29h-3zM795.500 529h4v29h-4zM804 529h7v29h-7zM813.500 529h2v29h-2zM821 529h4v29h-4zM826 529h1.500v29H826zM833 529h4v29h-4z"/>
<!-- boxes -->
<g fill="#f5f5f5" stroke="none">
<rect x="620" y="602" width="370" height="26"/>
<rect x="1007" y="602" width="371" height="26"/>
<rect x="620" y="704" width="758" height="25"/>
</g>
<g fill="none" stroke="#c8c8c8" stroke-width="1.300">
<rect x="619.500" y="601.500" width="371" height="83"/>
<rect x="1007.500" y="601.500" width="370.500" height="83"/>
<rect x="619.500" y="703.500" width="758.500" height="60"/>
<path d="M770.500 704v59M921.500 704v59M1080.500 704v59M1219.500 704v59"/>
</g>
<g class="b">
<text x="628" y="619" textLength="32" lengthAdjust="spacingAndGlyphs">Bill to</text>
<text x="1015" y="619" textLength="39" lengthAdjust="spacingAndGlyphs">Ship to</text>
<text x="628" y="721" textLength="25" lengthAdjust="spacingAndGlyphs">Date</text>
<text x="778" y="721" textLength="54" lengthAdjust="spacingAndGlyphs">Ship Date</text>
<text x="929" y="721" textLength="74" lengthAdjust="spacingAndGlyphs">Customer PO</text>
<text x="1088" y="721" textLength="63" lengthAdjust="spacingAndGlyphs">Total Cases</text>
<text x="1228" y="721" textLength="72" lengthAdjust="spacingAndGlyphs">Total Weight</text>
</g>
<text x="628" y="647" textLength="27" lengthAdjust="spacingAndGlyphs" style="font-size:11.500px">cxcvx</text>
<text x="1015" y="647" textLength="27" lengthAdjust="spacingAndGlyphs" style="font-size:11.500px">cxcvx</text>
<text x="1088" y="749" textLength="6.500">2</text>
<text x="1228" y="749" textLength="23" lengthAdjust="spacingAndGlyphs">0 LB</text>
<!-- item table -->
<rect x="620" y="783" width="758" height="42" fill="#034f87"/>
<path d="M733.500 783v42M960.500 783v42M1016.500 783v42M1083.500 783v42M1150.500 783v42M1211.500 783v42M1264.500 783v42M1314.500 783v42" stroke="#e6eef4"/>
<path d="M620 825v49.500h758V825M733.500 825v49M960.500 825v49M1016.500 825v49M1083.500 825v49M1150.500 825v49M1211.500 825v49M1264.500 825v49M1314.500 825v49" fill="none" stroke="#c8c8c8" stroke-width="1.200"/>
<g class="h">
<text x="627" y="808" textLength="27" lengthAdjust="spacingAndGlyphs">Item</text>
<text x="741" y="808" textLength="65" lengthAdjust="spacingAndGlyphs">Description</text>
<text x="973" y="808" textLength="30" lengthAdjust="spacingAndGlyphs">UOM</text>
<text x="1026" y="808" textLength="47" lengthAdjust="spacingAndGlyphs">Ordered</text>
<text x="1106" y="800" textLength="21" lengthAdjust="spacingAndGlyphs">Qty</text>
<text x="1094" y="816" textLength="45" lengthAdjust="spacingAndGlyphs">Shipped</text>
<text x="1166" y="800" textLength="29" lengthAdjust="spacingAndGlyphs">Qty /</text>
<text x="1167" y="816" textLength="26" lengthAdjust="spacingAndGlyphs">Case</text>
<text x="1222" y="808" textLength="31" lengthAdjust="spacingAndGlyphs">Cases</text>
<text x="1272" y="808" textLength="34" lengthAdjust="spacingAndGlyphs">Boxes</text>
<text x="1331" y="808" textLength="30" lengthAdjust="spacingAndGlyphs">Pallet</text>
</g>
<text x="627" y="844" textLength="13" lengthAdjust="spacingAndGlyphs">00</text>
<text x="627" y="860" textLength="84" lengthAdjust="spacingAndGlyphs">8000500191712</text>
<text x="1060" y="845" textLength="13" lengthAdjust="spacingAndGlyphs">10</text>
<text x="1128" y="845" textLength="13" lengthAdjust="spacingAndGlyphs">10</text>
<text x="1197" y="845" textLength="6.500">5</text>
<text x="1248" y="845" textLength="6.500">2</text>
<text x="619" y="902" textLength="120" lengthAdjust="spacingAndGlyphs" style="font-weight:bold">Terms and Conditions</text>
<text x="619" y="920" textLength="210" lengthAdjust="spacingAndGlyphs" style="fill:#555">This is contract only - void after 30 days</text>
<!-- annotations -->
<g style="filter:drop-shadow(2px 2px 2px rgba(0,0,0,.55))">
<path d="M1369 343L1147 762" stroke="#fa5a4c" stroke-width="7" fill="none"/>
<path d="M1129 757L1155 771 1132 780z" fill="#fa5a4c"/>
<rect x="1352.500" y="247" width="84" height="95" fill="none" stroke="#fa5a4c" stroke-width="4.500"/>
<rect x="1075" y="780" width="83" height="102" fill="none" stroke="#fa5a4c" stroke-width="4.500"/>
</g>
</svg>
</body></html>
